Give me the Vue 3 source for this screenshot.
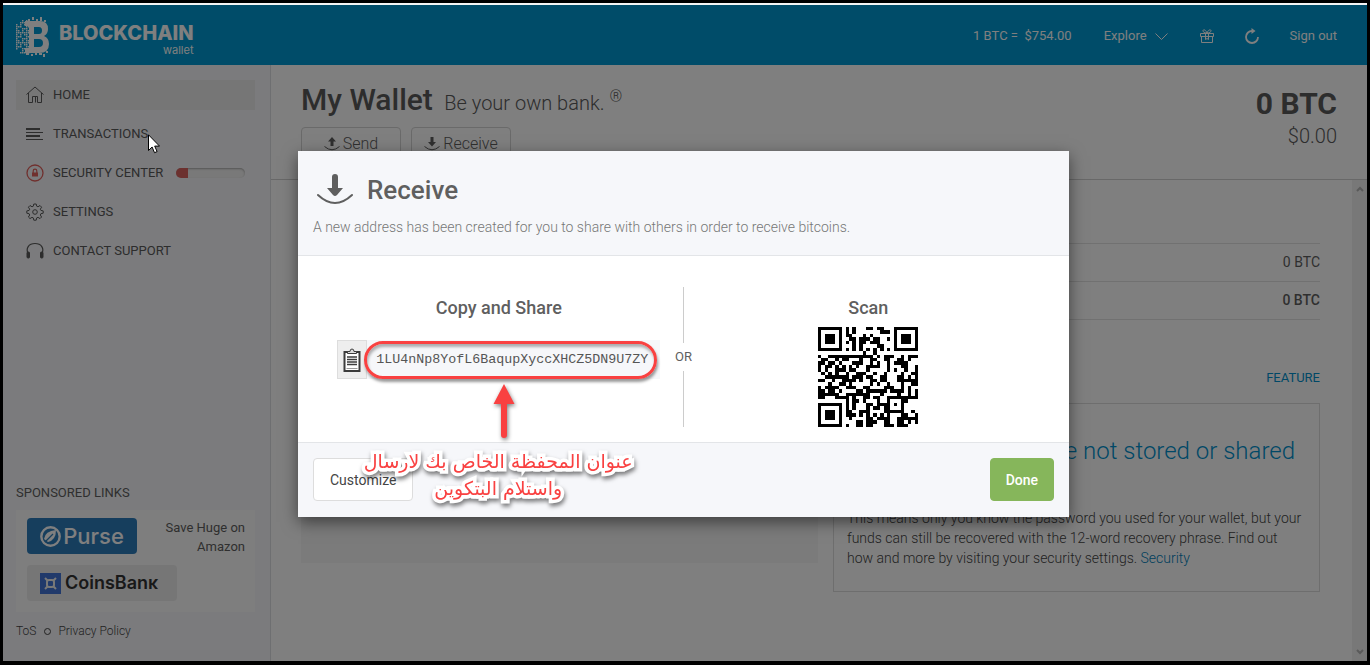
<script setup>
const address = '1LU4nNp8YofL6BaqupXyccXHCZ5DN9U7ZY'

const navItems = [
  { id: 'home', label: 'Home', active: true },
  { id: 'transactions', label: 'Transactions' },
  { id: 'security', label: 'Security Center', meter: 17 },
  { id: 'settings', label: 'Settings' },
  { id: 'support', label: 'Contact Support' },
]

// QR code, version 3, level M, byte mode: 44 data and 26 correction codewords.
const QR_SIZE = 29
const QR_MASK = 6
const masked = (r, c) => (((r * c) % 2) + ((r * c) % 3)) % 2 === 0

function gfMul(a, b) {
  let z = 0
  for (let i = 7; i >= 0; i--) {
    z = (z << 1) ^ ((z >>> 7) * 0x11d)
    z ^= ((b >>> i) & 1) * a
  }
  return z
}

function correction(data, degree) {
  const gen = new Array(degree).fill(0)
  gen[degree - 1] = 1
  let root = 1
  for (let i = 0; i < degree; i++) {
    for (let j = 0; j < degree; j++) {
      gen[j] = gfMul(gen[j], root)
      if (j + 1 < degree) gen[j] ^= gen[j + 1]
    }
    root = gfMul(root, 2)
  }
  const rem = new Array(degree).fill(0)
  for (const b of data) {
    const factor = b ^ rem.shift()
    rem.push(0)
    gen.forEach((g, i) => { rem[i] ^= gfMul(g, factor) })
  }
  return rem
}

function buildQr(text) {
  const bits = []
  const put = (value, count) => {
    for (let i = count - 1; i >= 0; i--) bits.push((value >>> i) & 1)
  }
  put(4, 4)
  put(text.length, 8)
  for (const ch of text) put(ch.charCodeAt(0), 8)
  put(0, 4)
  const data = []
  for (let i = 0; i < bits.length; i += 8) data.push(parseInt(bits.slice(i, i + 8).join(''), 2))
  const words = data.concat(correction(data, 26))

  const grid = Array.from({ length: QR_SIZE }, () => new Array(QR_SIZE).fill(null))
  const finder = (top, left) => {
    for (let r = -1; r <= 7; r++) {
      for (let c = -1; c <= 7; c++) {
        const y = top + r
        const x = left + c
        if (y < 0 || x < 0 || y >= QR_SIZE || x >= QR_SIZE) continue
        const d = Math.max(Math.abs(r - 3), Math.abs(c - 3))
        grid[y][x] = d !== 2 && d !== 4
      }
    }
  }
  finder(0, 0)
  finder(0, QR_SIZE - 7)
  finder(QR_SIZE - 7, 0)
  for (let r = -2; r <= 2; r++) {
    for (let c = -2; c <= 2; c++) grid[22 + r][22 + c] = Math.max(Math.abs(r), Math.abs(c)) !== 1
  }
  for (let i = 8; i < QR_SIZE - 8; i++) {
    grid[6][i] = i % 2 === 0
    grid[i][6] = i % 2 === 0
  }
  let rem = QR_MASK
  for (let i = 0; i < 10; i++) rem = (rem << 1) ^ ((rem >>> 9) * 0x537)
  const format = ((QR_MASK << 10) | rem) ^ 0x5412
  const bit = (i) => ((format >>> i) & 1) === 1
  for (let i = 0; i <= 5; i++) grid[i][8] = bit(i)
  grid[7][8] = bit(6)
  grid[8][8] = bit(7)
  grid[8][7] = bit(8)
  for (let i = 9; i < 15; i++) grid[8][14 - i] = bit(i)
  for (let i = 0; i < 8; i++) grid[8][QR_SIZE - 1 - i] = bit(i)
  for (let i = 8; i < 15; i++) grid[QR_SIZE - 15 + i][8] = bit(i)
  grid[QR_SIZE - 8][8] = true

  let n = 0
  for (let right = QR_SIZE - 1; right >= 1; right -= 2) {
    if (right === 6) right = 5
    for (let v = 0; v < QR_SIZE; v++) {
      for (let j = 0; j < 2; j++) {
        const x = right - j
        const up = ((right + 1) & 2) === 0
        const y = up ? QR_SIZE - 1 - v : v
        if (grid[y][x] !== null) continue
        const dark = n < words.length * 8 && ((words[n >>> 3] >>> (7 - (n & 7))) & 1) === 1
        grid[y][x] = dark !== masked(y, x)
        n++
      }
    }
  }
  let d = ''
  grid.forEach((row, y) => row.forEach((on, x) => { if (on) d += `M${x} ${y}h1v1h-1z` }))
  return d
}

const qrPath = buildQr('bitcoin:' + address)

// Loose pixels on the left flank of the logo.
const specks = []
for (let y = 0; y < 17; y++) {
  for (let x = 0; x < 7; x++) {
    if ((x * 7 + y * 5 + x * y * 3) % 5 < 3 && !(x < 2 && (y < 2 || y > 14))) specks.push([x * 2, y * 2 + 3])
  }
}
</script>

<template>
  <div class="screen">
    <header class="topbar">
      <a class="brand" href="#" aria-label="Blockchain wallet">
        <svg class="brand-mark" viewBox="0 0 34 40" aria-hidden="true">
          <rect v-for="(s, i) in specks" :key="i" :x="s[0]" :y="s[1]" width="1.5" height="1.5" />
          <path d="M12 2h2v2h-2zM16 0h2v3h-2zM20 2h2v3h-2zM24 0h2v4h-2zM28 3h2v2h-2zM10 36h3v2h-3zM15 37h2v2h-2zM19 36h2v2h-2zM23 36h3v2h-3zM27 37h2v3h-2zM30 34h2v2h-2z" />
          <path fill-rule="evenodd" d="M9 4h15q8 0 8 8 0 5-4 7 5 2 5 8 0 9-10 9H9v-5h4V9H9zM18 10v7h5q3 0 3-3.500T23 10zM18 22v8h5q4 0 4-4t-4-4z" />
        </svg>
        <span class="brand-text">
          <span class="brand-name">BLOCKCHAIN</span>
          <span class="brand-sub">wallet</span>
        </span>
      </a>
      <nav class="top-links" aria-label="Account">
        <span class="rate">1 BTC = &nbsp;$754.00</span>
        <button class="top-btn explore" type="button">Explore
          <svg width="13" height="7" viewBox="0 0 13 7" fill="none" stroke="currentColor"><path d="M.5.5l6 6 6-6" /></svg>
        </button>
        <button class="top-btn gift" type="button" aria-label="Gifts">
          <svg width="14" height="14" viewBox="0 0 14 14" fill="none" stroke="currentColor"><path d="M.5 4.500h13v3H.5zM1.500 7.500v6h11v-6M5.500 4.500v6l1.500-1 1.500 1v-6M7 4C5 4 2.500 3 3 1.500S6 1 7 4c1-3 3.500-4 4-2.500S9 4 7 4z" /></svg>
        </button>
        <button class="top-btn refresh" type="button" aria-label="Refresh">
          <svg width="16" height="16" viewBox="0 0 16 16" fill="none" stroke="currentColor" stroke-width="1.8"><path d="M9 3H8a6 6 0 1 0 6 6" /><path d="M7.500 0v6L11.500 3z" fill="currentColor" stroke="none" /></svg>
        </button>
        <a class="signout" href="#">Sign out</a>
      </nav>
    </header>

    <div class="body">
      <aside class="sidebar">
        <nav class="menu" aria-label="Main">
          <a v-for="item in navItems" :key="item.id" href="#" class="menu-item" :class="{ active: item.active }">
            <svg class="menu-icon" :class="item.id" viewBox="0 0 18 18" fill="none" stroke="currentColor" aria-hidden="true">
              <path v-if="item.id === 'home'" d="M.5 8.500 9 1l8.500 7.500M2.500 7v9.500h4v-6h5v6h4V7M9.500 10.500v6" />
              <template v-else-if="item.id === 'transactions'">
                <path d="M0 4h14M0 11h14" stroke-width="1.800" /><path d="M0 7.500h17M0 14.500h17" />
              </template>
              <template v-else-if="item.id === 'security'">
                <circle cx="9" cy="9" r="8" stroke-width="1.300" />
                <path d="M6 8.500h6v4H6z" fill="currentColor" stroke="none" /><path d="M7.200 9V7a1.800 1.800 0 0 1 3.600 0v2" stroke-width="1.200" />
              </template>
              <template v-else-if="item.id === 'settings'">
                <circle cx="9" cy="9" r="2.300" />
                <path d="M7.800 1h2.400l.5 2.200 1.300.6 2-1.300 1.600 1.700-1.300 2 .6 1.200 2.300.5v2.300l-2.300.5-.6 1.300 1.300 2-1.600 1.600-2-1.300-1.300.6-.5 2.300H7.800l-.5-2.300-1.300-.6-2 1.300L2.400 14l1.300-2-.6-1.300-2.300-.5V7.900l2.300-.5.6-1.200-1.300-2L4 2.500l2 1.300 1.300-.6z" />
              </template>
              <template v-else>
                <path d="M2.500 12.500C-1 6 3 1.500 9 1.500s10 4.500 6.500 11" stroke-width="1.200" />
                <rect x="1" y="10" width="2.500" height="6" rx="1" fill="currentColor" /><rect x="14.500" y="10" width="2.500" height="6" rx="1" fill="currentColor" />
              </template>
            </svg>
            <span>{{ item.label }}</span>
            <span v-if="item.meter" class="meter"><span class="meter-fill" :style="{ width: item.meter + '%' }"></span></span>
          </a>
        </nav>

        <section class="sponsors">
          <h2 class="sponsors-title">Sponsored Links</h2>
          <div class="sponsors-box">
            <div class="sponsor-row">
              <a class="purse" href="#">
                <svg width="21" height="21" viewBox="0 0 21 21" aria-hidden="true"><circle cx="10.500" cy="10.500" r="9.200" fill="none" stroke="currentColor" stroke-width="2.400" /><path d="M4 13Q5 5 16 4 16 14 8 16z" fill="currentColor" /><path d="M5 16 13 8" stroke="#2d7dbb" stroke-width="1.200" /></svg>
                <span>Purse</span>
              </a>
              <p class="purse-note">Save Huge on Amazon</p>
            </div>
            <a class="coinsbank" href="#">
              <svg width="21" height="21" viewBox="0 0 21 21" aria-hidden="true"><path fill="#4274d6" d="M0 0h21v21H0z" /><g fill="none" stroke="#f0f0f0" stroke-width="2"><rect x="7" y="7" width="7" height="7" rx="2" /><path d="m5 5 3 3M16 5l-3 3M5 16l3-3M16 16l-3-3" /></g></svg>
              <span>CoinsBanĸ</span>
            </a>
          </div>
          <footer class="legal"><a href="#">ToS</a><span class="ring-dot"></span><a href="#">Privacy Policy</a></footer>
        </section>
      </aside>

      <main class="main">
        <div class="wallet-head">
          <div>
            <h1 class="wallet-title">My Wallet <small>Be your own bank. <sup>®</sup></small></h1>
            <div class="actions">
              <button class="action" type="button">
                <svg width="16" height="14" viewBox="0 0 16 14" aria-hidden="true"><path d="M8 0 12 4.500H9.500V9h-3V4.500H4z" fill="currentColor" /><path d="M.5 9.500q7.500 6.500 15 0" fill="none" stroke="currentColor" /></svg>
                Send
              </button>
              <button class="action" type="button">
                <svg width="16" height="14" viewBox="0 0 16 14" aria-hidden="true"><path d="M8 9.500 12 5H9.500V0h-3v5H4z" fill="currentColor" /><path d="M.5 9.500q7.500 6.500 15 0" fill="none" stroke="currentColor" /></svg>
                Receive
              </button>
            </div>
          </div>
          <div class="balance">
            <strong>0 BTC</strong>
            <span>$0.00</span>
          </div>
        </div>

        <div class="scroller">
          <div class="content">
            <section class="panel-left"></section>
            <section class="column-right">
              <table class="totals">
                <tbody>
                  <tr><td>0 BTC</td></tr>
                  <tr><td>0 BTC</td></tr>
                </tbody>
              </table>
              <h2 class="feature-label">Feature</h2>
              <article class="feature">
                <h3>Passwords are not stored or shared</h3>
                <p>This means only you know the password you used for your wallet, but your funds can still be recovered with the 12-word recovery phrase. Find out how and more by visiting your security settings. <a href="#">Security</a></p>
              </article>
            </section>
          </div>
          <div class="scrollbar" aria-hidden="true">
            <svg width="8" height="6" viewBox="0 0 8 6" fill="none" stroke="currentColor" stroke-width="2"><path d="M1 5l3-3 3 3" /></svg>
            <svg width="8" height="6" viewBox="0 0 8 6" fill="none" stroke="currentColor" stroke-width="2"><path d="M1 1l3 3 3-3" /></svg>
          </div>
        </div>
      </main>
    </div>

    <div class="backdrop">
      <div class="modal" role="dialog" aria-modal="true" aria-labelledby="modal-title">
        <div class="modal-head">
          <div class="modal-heading">
            <svg width="36" height="31" viewBox="0 0 36 31" aria-hidden="true"><path d="M15 3q0-3 3-3t3 3v11h5l-6 7q-2 2-4 0l-6-7h5z" fill="currentColor" /><path d="M1 21q17 16 34 0" fill="none" stroke="currentColor" stroke-width="2" stroke-linecap="round" /></svg>
            <h2 id="modal-title">Receive</h2>
          </div>
          <p>A new address has been created for you to share with others in order to receive bitcoins.</p>
        </div>
        <div class="modal-body">
          <section class="share">
            <h3><label for="address">Copy and Share</label></h3>
            <div class="address-row">
              <button class="copy" type="button" aria-label="Copy address">
                <svg width="18" height="24" viewBox="0 0 18 24" aria-hidden="true"><path d="M1.500 4h15v19h-15z" fill="#fff" stroke="#3c3c3c" stroke-width="2" /><path d="M3.500 20.500h11" stroke="#999" /><path d="M4.500 5.500V3.500h2.500Q7 1 9 1t2 2.500h2.500v2z" fill="#ddd" stroke="#3c3c3c" /><path d="M4 9h10M4 11.500h10M4 14h10M4 16.500h10" stroke="#3c3c3c" stroke-width="1.300" /></svg>
              </button>
              <input id="address" class="address" type="text" :value="address" readonly />
              <div class="callout-ring"></div>
              <svg class="callout-arrow" width="22" height="56" viewBox="0 0 22 56" aria-hidden="true"><path d="M11 0 21.500 20H14v31q0 3-3 3t-3-3V20H.5z" fill="#f94141" /></svg>
              <p class="callout-text" dir="rtl" lang="ar">عنوان المحفظة الخاص بك لارسال<br />واستلام البتكوين</p>
            </div>
          </section>
          <div class="or">OR</div>
          <section class="scan">
            <h3>Scan</h3>
            <svg class="qr" viewBox="0 0 29 29" shape-rendering="crispEdges" role="img" aria-label="QR code of the address"><path :d="qrPath" /></svg>
          </section>
        </div>
        <div class="modal-foot">
          <button class="customize" type="button">Customize</button>
          <button class="done" type="button">Done</button>
        </div>
      </div>
    </div>

    <svg class="pointer" width="12" height="20" viewBox="0 0 12 20" aria-hidden="true"><path d="M.5.8v15.700l3.600-3.500 2.400 5.700 2.600-1.100-2.400-5.500h4.800z" fill="#fff" stroke="#000" /></svg>
  </div>
</template>

<style>
body {
  margin: 0;
}
</style>

<style scoped>
.screen {
  position: relative;
  display: flex;
  flex-direction: column;
  box-sizing: border-box;
  min-height: 100vh;
  border: 3px solid #000;
  border-bottom-width: 4px;
  background: #fff;
  color: #5f5f5f;
  font: 400 14px/20px Roboto, "Noto Sans", sans-serif;
}
.screen *,
.screen *::before,
.screen *::after {
  box-sizing: border-box;
}
h1, h2, h3, p {
  margin: 0;
}
a {
  color: inherit;
  text-decoration: none;
}
button {
  font: inherit;
  color: inherit;
  cursor: pointer;
}

/* top bar */
.topbar {
  display: flex;
  align-items: center;
  justify-content: space-between;
  height: 62px;
  padding: 0 30px 0 13px;
  border-top: 2px solid #f4f4f4;
  background: #0099d2;
  color: #fff;
}
.brand {
  display: flex;
  align-items: center;
  gap: 9px;
}
.brand-mark {
  width: 34px;
  height: 40px;
  margin-top: 3px;
  fill: #fff;
}
.brand-text {
  display: flex;
  flex-direction: column;
  align-items: flex-end;
  padding-top: 8px;
  font-family: Inter, sans-serif;
}
.brand-name {
  font-size: 20px;
  font-weight: 800;
  line-height: 22px;
}
.brand-sub {
  font-size: 11px;
  line-height: 12px;
}
.top-links {
  display: flex;
  align-items: center;
  padding-top: 2px;
  font-size: 13px;
}
.top-btn {
  display: flex;
  align-items: center;
  gap: 8px;
  padding: 0;
  border: 0;
  background: none;
}
.rate, .explore {
  margin-right: 32px;
}
.gift, .refresh {
  margin-right: 30px;
}

/* sidebar */
.body {
  display: flex;
  flex: 1;
}
.sidebar {
  display: flex;
  flex-direction: column;
  justify-content: space-between;
  flex: 0 0 268px;
  padding: 15px 15px 20px 13px;
  border-right: 1px solid #dcdee2;
  background: #f6f7fa;
}
.menu {
  display: flex;
  flex-direction: column;
  gap: 9px;
}
.menu-item {
  display: flex;
  align-items: center;
  height: 30px;
  padding: 0 10px;
  color: #5a5a5a;
  font-size: 13px;
  text-transform: uppercase;
}
.menu-item.active {
  background: #ececec;
}
.menu-icon {
  width: 18px;
  height: 18px;
  margin-right: 9px;
}
.menu-icon.security {
  color: #e0605c;
}
.meter {
  width: 69px;
  height: 10px;
  margin-left: auto;
  overflow: hidden;
  border-radius: 5px;
  background: #f2f2f2;
  box-shadow: inset 0 1px 2px #aaa;
}
.meter-fill {
  display: block;
  height: 10px;
  background: #d9625f;
}
.sponsors-title {
  margin-bottom: 7px;
  font-size: 13px;
  font-weight: 400;
  text-transform: uppercase;
}
.sponsors-box {
  padding: 8px 10px 11px 11px;
  background: #fcfcfc;
}
.sponsor-row {
  display: flex;
  justify-content: space-between;
  margin-bottom: 9px;
}
.purse {
  display: flex;
  align-items: center;
  justify-content: center;
  gap: 2px;
  width: 110px;
  height: 36px;
  border-radius: 4px;
  background: #2d7dbb;
  color: #fff;
  font: 500 22px/26px Inter, sans-serif;
}
.purse-note {
  width: 90px;
  font-size: 13px;
  line-height: 19px;
  text-align: right;
}
.coinsbank {
  display: flex;
  align-items: center;
  gap: 4px;
  width: 150px;
  height: 36px;
  padding-left: 13px;
  border-radius: 4px;
  background: #ececec;
  color: #333;
  font: 600 18px/24px Inter, sans-serif;
}
.legal {
  display: flex;
  align-items: center;
  margin-top: 9px;
  font-size: 12px;
  font-weight: 300;
  color: #444;
}
.ring-dot {
  width: 7px;
  height: 7px;
  margin: 0 7px 0 8px;
  border: 1px solid currentColor;
  border-radius: 50%;
}

/* wallet */
.main {
  display: flex;
  flex: 1;
  flex-direction: column;
}
.wallet-head {
  display: flex;
  justify-content: space-between;
  height: 115px;
  padding: 18px 30px 0;
  border-bottom: 1px solid #d0d0d0;
}
.wallet-title {
  color: #5a5a5a;
  font-size: 30px;
  font-weight: 500;
  line-height: 34px;
}
.wallet-title small {
  margin-left: 4px;
  font-size: 20px;
  font-weight: 300;
}
.wallet-title sup {
  font-size: 16px;
  line-height: 0;
}
.actions {
  display: flex;
  gap: 10px;
  margin-top: 7px;
}
.action {
  display: flex;
  align-items: center;
  justify-content: center;
  gap: 3px;
  width: 100px;
  height: 34px;
  padding: 0;
  border: 1px solid #d4d4d4;
  border-radius: 4px;
  background: #fff;
  font-size: 16px;
  font-weight: 300;
}
.balance {
  display: flex;
  flex-direction: column;
  align-items: flex-end;
  color: #5a5a5a;
}
.balance strong {
  font-size: 30px;
  font-weight: 700;
  line-height: 42px;
}
.balance span {
  font-size: 20px;
  font-weight: 300;
  line-height: 22px;
}
.scroller {
  display: flex;
  flex: 1;
}
.content {
  display: grid;
  grid-template-columns: 517fr 487fr;
  gap: 15px;
  flex: 1;
  align-items: start;
  padding: 63px 32px 0 30px;
}
.panel-left {
  height: 320px;
  background: #f7f7f7;
}
.totals {
  width: 100%;
  border-collapse: collapse;
  border-bottom: 1px solid #e2e2e2;
}
.totals td {
  height: 38px;
  padding: 0 0 2px;
  border-top: 1px solid #e2e2e2;
  text-align: right;
}
.totals tr:last-child td {
  font-weight: 500;
}
.feature-label {
  margin: 48px 0 15px;
  color: #0091ce;
  font-size: 13px;
  font-weight: 400;
  text-align: right;
  text-transform: uppercase;
}
.feature {
  padding: 31px 13px 23px;
  border: 1px solid #dcdcdc;
}
.feature h3 {
  margin: 0 11px 41px 0;
  color: #0091ce;
  font-size: 24px;
  font-weight: 300;
  line-height: 32px;
  text-align: right;
}
.feature p {
  font-weight: 300;
  color: #444;
}
.feature a {
  color: #0080ba;
}
.scrollbar {
  display: flex;
  flex: 0 0 15px;
  flex-direction: column;
  align-items: center;
  justify-content: space-between;
  padding: 6px 0;
  background: #f0f0f0;
  color: #b4b4b4;
}

/* dialog */
.backdrop {
  position: absolute;
  inset: 2px 0 0;
  display: flex;
  align-items: flex-start;
  justify-content: center;
  padding: 146px 3px 0 0;
  background: rgba(0, 0, 0, 0.5);
}
.modal {
  width: 771px;
  max-width: 100%;
  background: #fff;
  box-shadow: 0 5px 15px rgba(0, 0, 0, 0.5);
}
.modal-head {
  height: 105px;
  padding: 23px 15px 0;
  border-bottom: 1px solid #e3e5e8;
  background: #f6f7fa;
}
.modal-heading {
  display: flex;
  align-items: center;
  gap: 14px;
  padding-left: 4px;
  height: 31px;
}
.modal-heading h2 {
  font-size: 26px;
  font-weight: 500;
  line-height: 30px;
}
.modal-head p {
  margin-top: 12px;
  color: #777;
  font-weight: 300;
}
.modal-body {
  display: grid;
  grid-template-columns: 1fr 34px 1fr;
  padding: 31px 33px 15px;
}
.modal-body h3 {
  font-size: 18px;
  font-weight: 500;
  line-height: 20px;
}
.share, .scan {
  display: flex;
  flex-direction: column;
  align-items: center;
  padding-top: 11px;
}
.address-row {
  position: relative;
  display: flex;
  margin-top: 22px;
}
.copy {
  display: flex;
  align-items: center;
  justify-content: center;
  width: 30px;
  height: 39px;
  padding: 0;
  border: 1px solid #ddd;
  background: #eee;
}
.address {
  width: 293px;
  height: 39px;
  padding: 0 9px;
  border: 0;
  background: #f6f7fa;
  color: #555;
  font-family: "Liberation Mono", monospace;
}
.callout-ring {
  position: absolute;
  inset: 1px 3px 0 27px;
  border: 3px solid #f94141;
  border-radius: 20px;
  box-shadow: 1px 3px 3px rgba(0, 0, 0, 0.4), inset 1px 3px 3px rgba(0, 0, 0, 0.3);
  pointer-events: none;
}
.callout-arrow {
  position: absolute;
  top: 44px;
  left: 156px;
  overflow: visible;
  filter: drop-shadow(1px 2px 2px rgba(0, 0, 0, 0.5));
}
.callout-text {
  position: absolute;
  top: 108px;
  left: 26px;
  z-index: 1;
  width: 270px;
  color: #f94141;
  font-family: "DejaVu Sans", sans-serif;
  font-size: 19px;
  line-height: 27px;
  text-align: center;
  white-space: nowrap;
  paint-order: stroke fill;
  -webkit-text-stroke: 7px #fff;
  filter: drop-shadow(1px 3px 2px rgba(0, 0, 0, 0.5));
}
.or {
  display: flex;
  flex-direction: column;
  align-items: center;
  gap: 4px;
  font-size: 13px;
}
.or::before,
.or::after {
  content: "";
  flex: 1;
  border-left: 1px solid #ccc;
}
.scan h3 {
  margin-bottom: 9px;
}
.qr {
  width: 100px;
  height: 100px;
}
.modal-foot {
  display: flex;
  justify-content: space-between;
  padding: 15px 15px 16px;
  border-top: 1px solid #e3e5e8;
  background: #f6f7fa;
}
.customize, .done {
  height: 43px;
  padding: 0 16px;
  border: 1px solid #ddd;
  border-radius: 4px;
  background: #fff;
  color: #444;
  font-weight: 400;
}
.done {
  padding: 0 15px;
  border-color: #86b65b;
  background: #86b65b;
  color: #fff;
  font-weight: 500;
}
.pointer {
  position: absolute;
  top: 131px;
  left: 145px;
}
</style>
